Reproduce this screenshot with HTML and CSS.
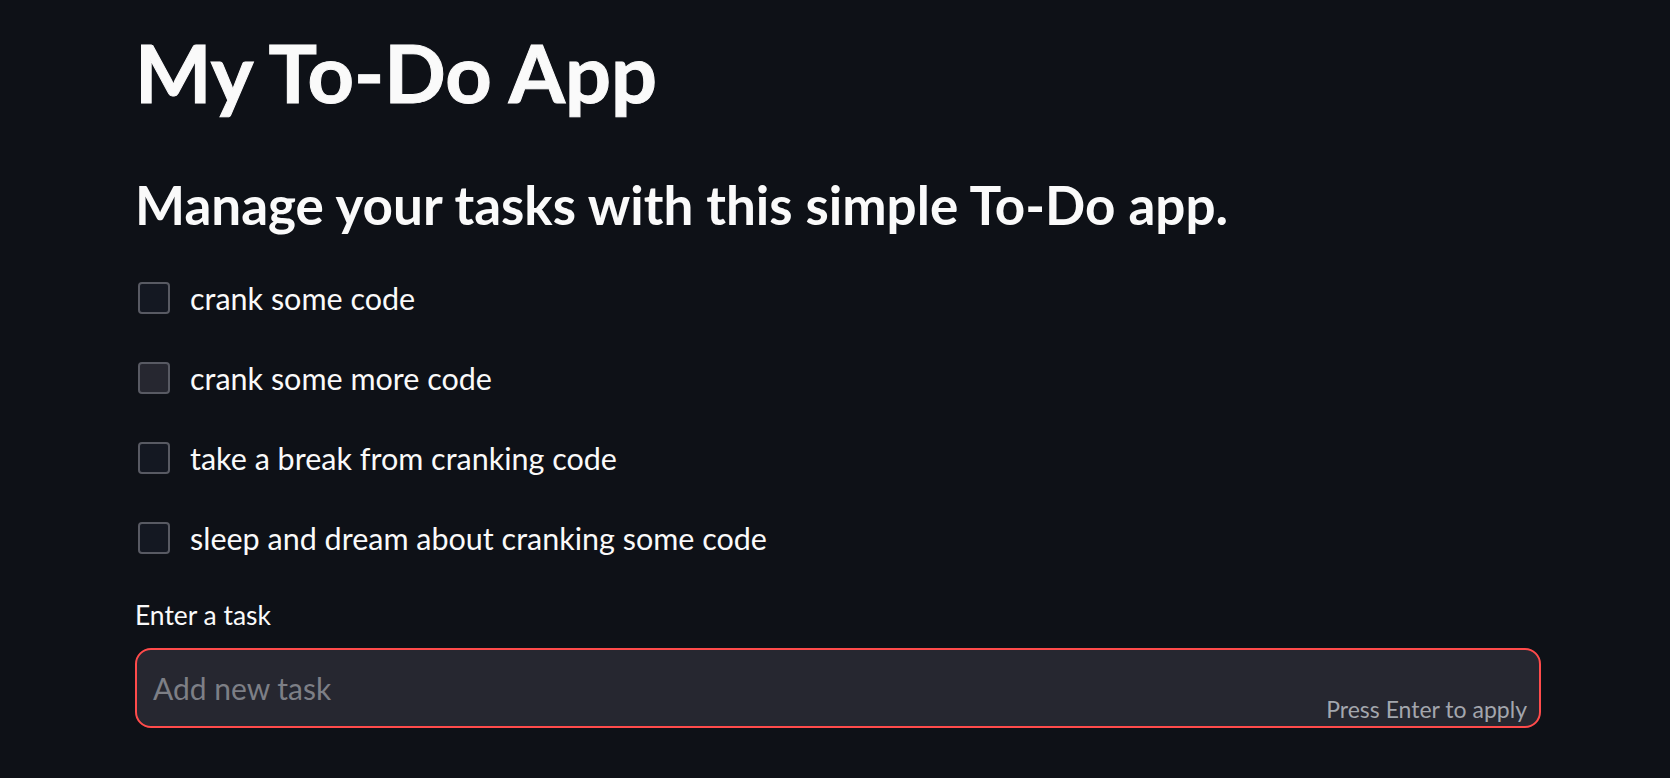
FILE: index.html
```html
<!DOCTYPE html>
<html lang="en">
<head>
<meta charset="utf-8">
<title>My To-Do App</title>
<link rel="stylesheet" href="styles.css">
</head>
<body>
<main class="app">
  <div class="block">
    <h1 class="title">My To-Do App</h1>
    <h3 class="subtitle">Manage your tasks with this simple To-Do app.</h3>
    <div class="tasks">
      <label class="task"><span class="box"></span><span class="task-text">crank some code</span></label>
      <label class="task"><span class="box box-hover"></span><span class="task-text">crank some more code</span></label>
      <label class="task"><span class="box"></span><span class="task-text">take a break from cranking code</span></label>
      <label class="task"><span class="box"></span><span class="task-text">sleep and dream about cranking some code</span></label>
    </div>
    <div class="field">
      <div class="field-label">Enter a task</div>
      <div class="input">
        <span class="placeholder">Add new task</span>
        <span class="hint">Press Enter to apply</span>
      </div>
    </div>
  </div>
</main>
</body>
</html>
```
FILE: styles.css
```css
html, body {
  margin: 0;
  padding: 0;
  background: #0e1117;
}
body {
  font-family: "Source Sans Pro", Lato, "Noto Sans", sans-serif;
  color: #fafafa;
  width: 1670px;
  height: 778px;
  overflow: hidden;
}
.app {
  padding-left: 135px;
}
.block {
  width: 1406px;
  display: flex;
  flex-direction: column;
}
.title {
  margin: 0;
  padding-top: 24px;
  font-size: 81px;
  line-height: 96px;
  font-weight: 700;
  height: 96px;
  -webkit-text-stroke: 1px #fafafa;
}
.subtitle {
  margin: 53px 0 0 0;
  font-size: 53px;
  line-height: 64px;
  font-weight: 700;
}
.tasks {
  margin-top: 37px;
  display: flex;
  flex-direction: column;
  gap: 32px;
}
.task {
  display: flex;
  align-items: center;
  height: 48px;
  gap: 20px;
}
.box {
  width: 28px;
  height: 28px;
  margin-left: 3px;
  border: 2px solid #585a63;
  border-radius: 4px;
  background: #141822;
  flex: none;
}
.box-hover {
  background: #262730;
}
.task-text {
  font-size: 30.5px;
  line-height: 48px;
}
.field {
  margin-top: 35px;
  display: flex;
  flex-direction: column;
  gap: 15px;
}
.field-label {
  font-size: 26.4px;
  line-height: 36px;
}
.input {
  height: 76px;
  border: 2px solid #ff4b4b;
  border-radius: 16px;
  background: #262730;
  display: flex;
  align-items: flex-start;
  justify-content: space-between;
  padding: 0 12px 0 16px;
}
.placeholder {
  font-size: 30px;
  line-height: 76px;
  color: #7d7f86;
}
.hint {
  align-self: flex-end;
  font-size: 23px;
  line-height: 32px;
  color: #a3a6ad;
  padding-bottom: 1px;
}
```
